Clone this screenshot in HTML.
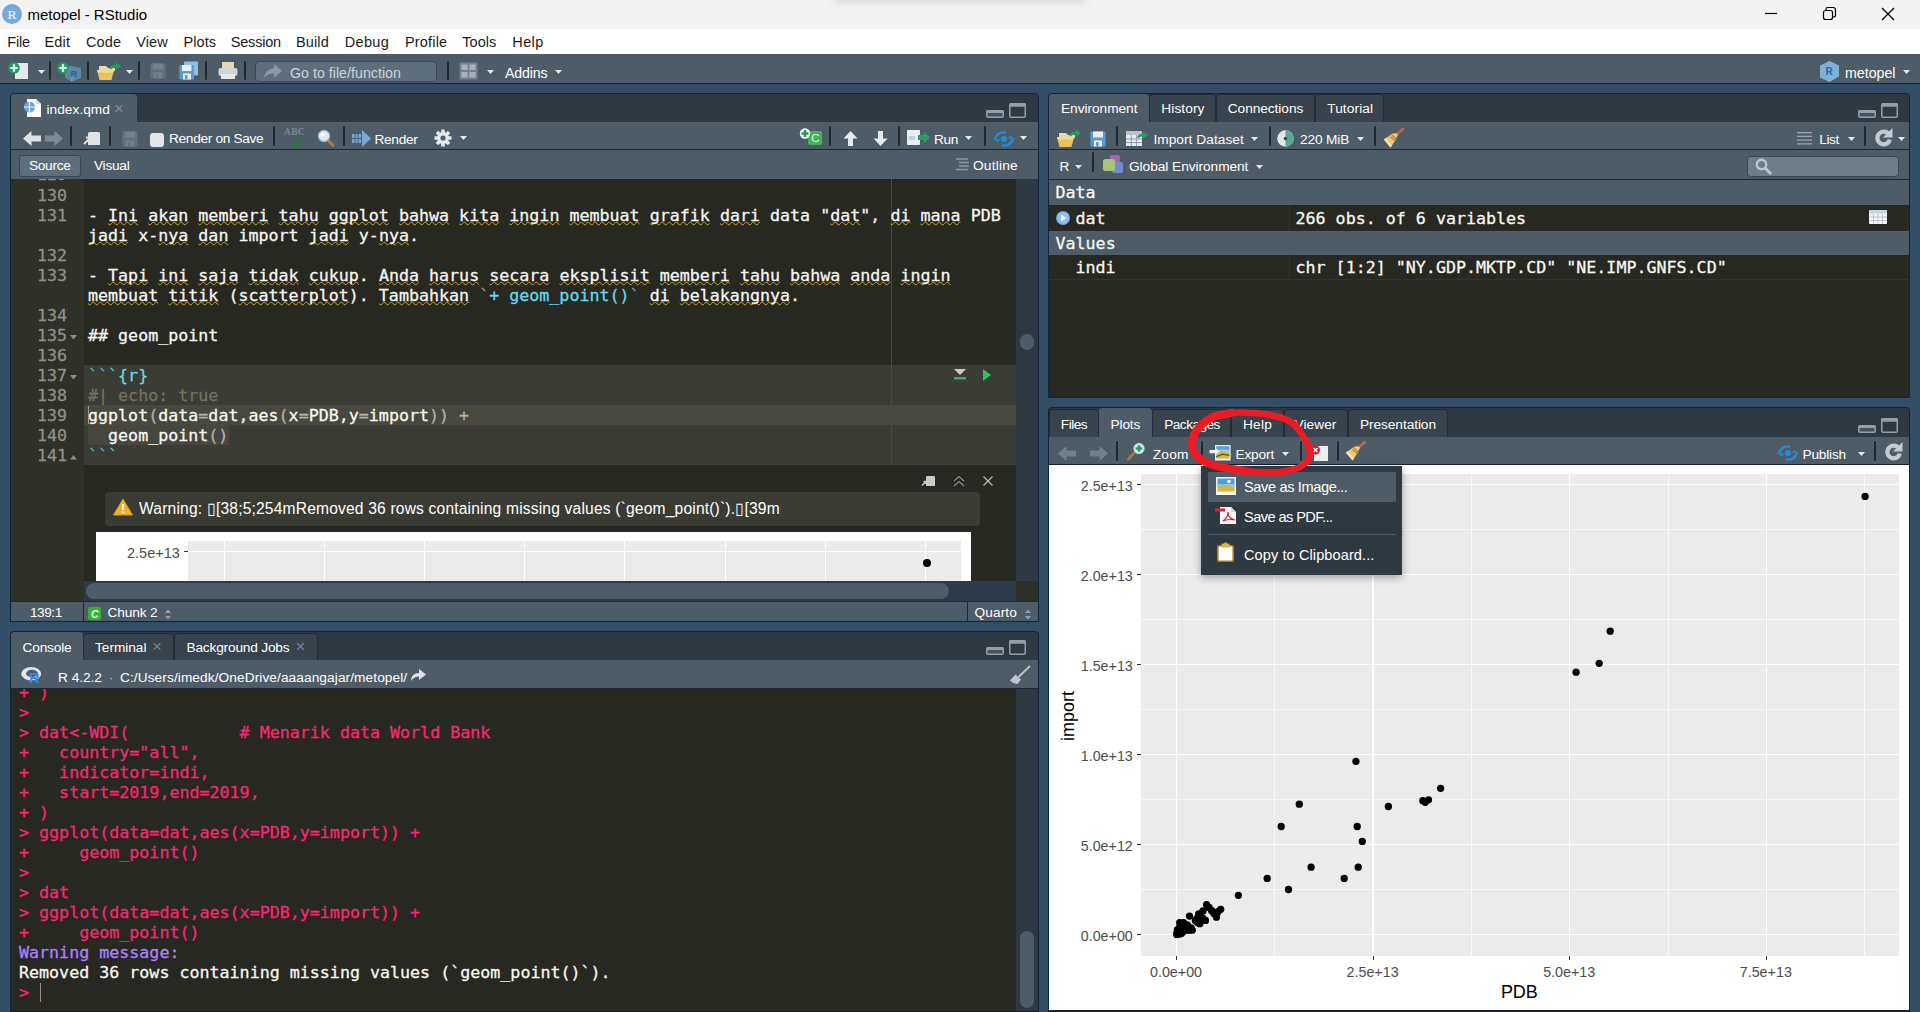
<!DOCTYPE html>
<html lang="id"><head><meta charset="utf-8"><title>metopel - RStudio</title>
<style>
*{box-sizing:border-box;margin:0;padding:0}
html,body{width:1920px;height:1012px;overflow:hidden}
body{background:#324d66;font-family:"Liberation Sans",sans-serif;font-size:13.6px;color:#fff;position:relative}
.abs{position:absolute}
.t{position:absolute;white-space:pre;line-height:1}
.mono{font-family:"DejaVu Sans Mono","Liberation Mono",monospace;font-size:16.67px;-webkit-text-stroke:0.28px}
#titlebar{left:0;top:0;width:1920px;height:29px;background:#f3f3f3}
#menubar{left:0;top:29px;width:1920px;height:25px;background:#fff}
#toolbar{left:0;top:54px;width:1920px;height:30px;background:#4e5c68;border-bottom:1px solid #10253a}

.pane{position:absolute;background:#272822;border:1px solid #10253a;border-radius:4px 4px 0 0;overflow:hidden}
.tabbar{position:absolute;left:0;top:0;right:0;height:28px;background:#2f3941}
.tab{position:absolute;top:3px;height:25px;background:#2f3941;border:1px solid #232c33;border-bottom:none;border-radius:4px 4px 0 0}
.tab.on{background:#4d5c69;top:2px;height:26px;border-color:#4d5c69}
.tb{position:absolute;left:0;right:0;background:#4d5c69}
.sep{position:absolute;width:2px;background:linear-gradient(#222b33,#1d252c 50%,#222b33);border-radius:1px}
.ln{position:absolute;right:0;text-align:right;color:#8f908a}
svg{position:absolute;overflow:visible}
u{text-decoration:underline wavy #c8a52a;text-decoration-thickness:1px;text-underline-offset:0px;text-decoration-skip-ink:none}
</style></head>
<body>
<div class="abs" id="titlebar"></div>
<div class="abs" style="left:835px;top:-12px;width:250px;height:12px;border-radius:6px;box-shadow:0 0 9px 3px rgba(0,0,0,.10)"></div>
<div class="abs" id="menubar"></div>
<div class="abs" id="toolbar"></div>
<div class="abs" style="left:2px;top:4px;width:20px;height:20px;border-radius:50%;background:#75aadb"></div>
<div class="t " style="left:7.5px;top:8px;font-size:13.5px;color:#fff;font-family:'Liberation Serif',serif;">R</div>
<div class="t " style="left:27.5px;top:7px;font-size:15px;color:#000;letter-spacing:-0.033px;">metopel - RStudio</div>
<svg style="left:1764px;top:6px" width="140" height="18" viewBox="0 0 140 18"><path d="M1 7.5h12" stroke="#000" stroke-width="1.2" fill="none"/><rect x="59.5" y="4.5" width="9" height="9" rx="2" fill="none" stroke="#000" stroke-width="1.2"/><path d="M62 4.5v-1.2a1.8 1.8 0 0 1 1.8-1.8h5.4a2.3 2.3 0 0 1 2.3 2.3v5.4a1.8 1.8 0 0 1-1.8 1.8h-1.2" fill="none" stroke="#000" stroke-width="1.2"/><path d="M118 2l12 12M130 2l-12 12" stroke="#000" stroke-width="1.3" fill="none"/></svg>
<div class="t " style="left:7.3px;top:34.8px;font-size:14.5px;color:#1a1a1a;letter-spacing:-0.216px;">File</div>
<div class="t " style="left:44.5px;top:34.8px;font-size:14.5px;color:#1a1a1a;letter-spacing:0.153px;">Edit</div>
<div class="t " style="left:85.9px;top:34.8px;font-size:14.5px;color:#1a1a1a;letter-spacing:0.209px;">Code</div>
<div class="t " style="left:136.2px;top:34.8px;font-size:14.5px;color:#1a1a1a;letter-spacing:0.133px;">View</div>
<div class="t " style="left:183.6px;top:34.8px;font-size:14.5px;color:#1a1a1a;letter-spacing:0.033px;">Plots</div>
<div class="t " style="left:230.79999999999998px;top:34.8px;font-size:14.5px;color:#1a1a1a;letter-spacing:-0.212px;">Session</div>
<div class="t " style="left:296.09999999999997px;top:34.8px;font-size:14.5px;color:#1a1a1a;letter-spacing:0.091px;">Build</div>
<div class="t " style="left:344.8px;top:34.8px;font-size:14.5px;color:#1a1a1a;letter-spacing:0.294px;">Debug</div>
<div class="t " style="left:405.0px;top:34.8px;font-size:14.5px;color:#1a1a1a;letter-spacing:0.171px;">Profile</div>
<div class="t " style="left:462.3px;top:34.8px;font-size:14.5px;color:#1a1a1a;letter-spacing:0.050px;">Tools</div>
<div class="t " style="left:512.3000000000001px;top:34.8px;font-size:14.5px;color:#1a1a1a;letter-spacing:0.394px;">Help</div>
<div class="sep" style="left:48.7px;top:61px;height:19px"></div>
<div class="sep" style="left:87px;top:61px;height:19px"></div>
<div class="sep" style="left:137.5px;top:61px;height:19px"></div>
<div class="sep" style="left:205.3px;top:61px;height:19px"></div>
<div class="sep" style="left:244px;top:61px;height:19px"></div>
<div class="sep" style="left:447.3px;top:61px;height:19px"></div>
<svg style="left:8px;top:62px" width="21" height="18" viewBox="0 0 21 18"><path d="M7 1h13v16H7z" fill="#e6e8ea"/><circle cx="6" cy="6" r="5.8" fill="#1f9d63"/><path d="M6 2.3v7.4M2.3 6h7.4" stroke="#e9fff3" stroke-width="2.2"/></svg>
<svg style="left:38px;top:70px" width="7" height="4" viewBox="0 0 7 4"><path d="M0 0h7l-3.500 4z" fill="#e4e7ea"/></svg>
<svg style="left:57px;top:62px" width="26" height="20" viewBox="0 0 26 20"><path d="M13 4l11 2v10l-9 3.5L8 16V7z" fill="#5e8fb3" opacity=".85"/><path d="M15 9.5v10" stroke="#86b0cf" stroke-width=".8"/><text x="13.5" y="15" font-size="9" font-weight="bold" fill="#27619a" font-family="Liberation Sans,sans-serif">R</text><circle cx="6" cy="6" r="5.8" fill="#1f9d63"/><path d="M6 2.3v7.4M2.3 6h7.4" stroke="#e9fff3" stroke-width="2.2"/></svg>
<svg style="left:96px;top:62px" width="26" height="19" viewBox="0 0 26 19"><path d="M3 4h7l2 2h7v3H3z" fill="#e8d9a6"/><path d="M1 8h17l-2.5 10H3.5z" fill="#e6c35c"/><path d="M1 8h17l-.6 2.5H1.6z" fill="#f3dc8e"/><path d="M13 6c2-3 5-3.5 7-3V.5L25 4l-5 3.5V5.5c-2-.3-4 .5-5 2z" fill="#1f9d63"/></svg>
<svg style="left:126px;top:70px" width="7" height="4" viewBox="0 0 7 4"><path d="M0 0h7l-3.500 4z" fill="#e4e7ea"/></svg>
<svg style="left:150px;top:63px" width="16" height="16" viewBox="0 0 16 16"><g opacity="1"><rect x="0.5" y="0.5" width="15" height="15" rx="1" fill="#63717d"/><rect x="3" y="0.5" width="10" height="6" fill="#73808c"/><rect x="4" y="9.5" width="8" height="6" fill="#73808c"/><rect x="6" y="11" width="2.5" height="4.5" fill="#63717d"/></g></svg>
<svg style="left:179px;top:61px" width="20" height="19" viewBox="0 0 20 19"><rect x="5" y="0.5" width="14" height="14" rx="1" fill="#8fc0e6"/><rect x="0.5" y="4" width="14.5" height="14.5" rx="1" fill="#5b9bd5"/><rect x="3" y="4" width="9.5" height="6" fill="#e8eef4"/><rect x="4" y="12.5" width="8" height="6" fill="#e8eef4"/><rect x="6" y="14" width="2.5" height="4.5" fill="#5b9bd5"/></svg>
<svg style="left:218px;top:61px" width="20" height="19" viewBox="0 0 20 19"><rect x="4" y="1" width="12" height="8" fill="#e4d9b0"/><rect x="0.5" y="7" width="19" height="8" rx="2" fill="#cfd5da"/><rect x="3" y="13" width="14" height="5" fill="#e6e9ec"/></svg>
<div class="abs" style="left:254.5px;top:61px;width:182.5px;height:20.5px;background:#5f6e7b;border:1px solid #3b4854;border-radius:4px"></div>
<svg style="left:263px;top:63px" width="20" height="16" viewBox="0 0 20 16"><path d="M1 15c1-7 5-9.5 10-9.5V1l8 7-8 7v-4.5C7 10.500 3.500 11.500 1 15z" fill="#8b98a5"/></svg>
<div class="t " style="left:290px;top:66px;font-size:14.2px;color:#cdd3d8;letter-spacing:0.026px;">Go to file/function</div>
<svg style="left:459px;top:62px" width="19" height="18" viewBox="0 0 19 18"><rect x=".5" y=".5" width="18" height="17" rx="1.5" fill="#76838f"/><rect x="2.5" y="2.5" width="6" height="5.500" fill="#a8b2bb"/><rect x="10.5" y="2.5" width="6" height="5.500" fill="#a8b2bb"/><rect x="2.5" y="10" width="6" height="5.500" fill="#a8b2bb"/><rect x="10.5" y="10" width="6" height="5.500" fill="#a8b2bb"/></svg>
<svg style="left:487px;top:70px" width="7" height="4" viewBox="0 0 7 4"><path d="M0 0h7l-3.500 4z" fill="#e4e7ea"/></svg>
<div class="t " style="left:505px;top:66px;font-size:14.2px;color:#fff;letter-spacing:-0.153px;">Addins</div>
<svg style="left:555px;top:70px" width="7" height="4" viewBox="0 0 7 4"><path d="M0 0h7l-3.500 4z" fill="#e4e7ea"/></svg>
<svg style="left:1820px;top:61px" width="19" height="21" viewBox="0 0 19 21"><path d="M9.500 0L19 4.500v11L9.500 21 0 16.500v-12z" fill="#7fb0d6"/><text x="5.500" y="14" font-size="10" font-weight="bold" fill="#2a6aa6" font-family="Liberation Sans,sans-serif">R</text></svg>
<div class="t " style="left:1845px;top:66px;font-size:14.2px;color:#fff;letter-spacing:-0.003px;">metopel</div>
<svg style="left:1903px;top:70px" width="7" height="4" viewBox="0 0 7 4"><path d="M0 0h7l-3.500 4z" fill="#e4e7ea"/></svg>
<div class="pane" style="left:10px;top:93px;width:1029px;height:528.5px"></div>
<div class="abs" style="left:11px;top:94px;width:1027px;height:28px;background:#2f3941;border-radius:3px 3px 0 0"></div>
<div class="abs" style="left:11px;top:94px;width:126px;height:28px;background:#4e5c68;border-radius:3px 4px 0 0"></div>
<div class="abs" style="left:11px;top:122px;width:1027px;height:27px;background:#4e5c68;"></div>
<div class="abs" style="left:11px;top:149px;width:1027px;height:1px;background:#1c2833;"></div>
<div class="abs" style="left:11px;top:150px;width:1027px;height:29px;background:#4e5c68;"></div>
<div class="abs" style="left:11px;top:179px;width:1027px;height:422px;background:#272822;"></div>
<div class="abs" style="left:11px;top:179px;width:73px;height:422px;background:#2f3129;"></div>
<div class="abs" style="left:84px;top:365px;width:932px;height:100px;background:#3b3c36;"></div>
<div class="abs" style="left:84px;top:405px;width:932px;height:20px;background:#48483e;"></div>
<div class="abs" style="left:88px;top:425px;width:141px;height:20px;background:#46463f;"></div>
<div class="abs" style="left:891px;top:179px;width:1px;height:286px;background:#4a4b45;"></div>
<div class="abs" style="left:1016px;top:179px;width:22px;height:402px;background:#2f3941;"></div>
<div class="abs" style="left:1020px;top:334px;width:14px;height:16px;border-radius:8px;background:#4e5c68"></div>
<div class="abs" style="left:84px;top:581px;width:932px;height:20px;background:#2c3b49;"></div>
<div class="abs" style="left:1016px;top:581px;width:22px;height:20px;background:#2d2e28;"></div>
<div class="abs" style="left:86px;top:583px;width:863px;height:16px;border-radius:8px;background:#4e5c68"></div>
<div class="abs" style="left:11px;top:601px;width:1027px;height:19.5px;background:#4e5c68;border-top:1px solid #1c2833"></div>
<div class="abs" style="left:82.5px;top:602px;width:1px;height:19.5px;background:#1c2833;"></div>
<div class="abs" style="left:967px;top:602px;width:1px;height:19.5px;background:#1c2833;"></div>
<div class="t " style="left:30px;top:605.5px;font-size:13.7px;color:#fff;letter-spacing:-0.497px;">139:1</div>
<div class="abs" style="left:88px;top:607px;width:13px;height:13px;background:#36b336;border-radius:2px"></div>
<div class="t " style="left:91px;top:608.5px;font-size:10.5px;color:#e9ffe9;font-weight:bold;font-style:italic;">C</div>
<div class="t " style="left:107.5px;top:605.5px;font-size:13.7px;color:#fff;letter-spacing:-0.147px;">Chunk 2</div>
<svg style="left:165px;top:609px" width="6" height="10" viewBox="0 0 6 10"><path d="M0 4l3-3.5 3 3.5zM0 7l3 3.5 3-3.5z" fill="#93a0ab"/></svg>
<div class="t " style="left:974.5px;top:605.8px;font-size:13.7px;color:#fff;letter-spacing:0.103px;">Quarto</div>
<svg style="left:1025px;top:609px" width="6" height="10" viewBox="0 0 6 10"><path d="M0 4l3-3.5 3 3.5zM0 7l3 3.5 3-3.5z" fill="#93a0ab"/></svg>
<svg style="left:23px;top:98px" width="20" height="20" viewBox="0 0 20 20"><path d="M4 1h9l5 5v13H4z" fill="#fff"/><path d="M13 1l5 5h-5z" fill="#d4dbe2"/><circle cx="6.5" cy="9" r="5.5" fill="#6fa4d8"/><path d="M6.5 3.5v11M1 9h11" stroke="#eaf2fa" stroke-width="1.2"/></svg>
<div class="t " style="left:46.5px;top:102.5px;font-size:13.7px;color:#fff;letter-spacing:0.032px;">index.qmd</div>
<div class="t " style="left:114px;top:100px;font-size:17px;color:#7f8c97;">×</div>
<svg style="left:986px;top:102.7px" width="42" height="16" viewBox="0 0 42 16"><rect x="0.75" y="7.75" width="16.5" height="6.500" rx="1.200" fill="#46535f" stroke="#929ea8" stroke-width="1.500"/><rect x="0.500" y="7.300" width="17" height="2.600" rx="1" fill="#929ea8"/><rect x="23.75" y="0.75" width="15.500" height="13.500" rx="1.200" fill="#2f3941" stroke="#929ea8" stroke-width="1.500"/><rect x="23.300" y="0.300" width="16.400" height="3.400" rx="1" fill="#929ea8"/></svg>
<svg style="left:22px;top:130px" width="42" height="17" viewBox="0 0 42 17"><path d="M1 8.5L9.5 1v4.5H19v6H9.5V16z" fill="#dfe3e7"/><path d="M41 8.5L32.5 1v4.5H23v6h9.5V16z" fill="#7e8b96"/></svg>
<div class="sep" style="left:70px;top:125.5px;height:20px"></div>
<svg style="left:83px;top:131px" width="18" height="15" viewBox="0 0 18 15"><path d="M5 2.5Q5 1 6.5 1h9Q17 1 17 2.5V14H5z" fill="#dfe3e7"/><path d="M1 13l6-6M3 6.5h4.5V11" stroke="#dfe3e7" stroke-width="2" fill="none"/></svg>
<div class="sep" style="left:109px;top:125.5px;height:20px"></div>
<svg style="left:122px;top:131px" width="16" height="16" viewBox="0 0 16 16"><g opacity="1"><rect x="0.5" y="0.5" width="15" height="15" rx="1" fill="#63717d"/><rect x="3" y="0.5" width="10" height="6" fill="#73808c"/><rect x="4" y="9.5" width="8" height="6" fill="#73808c"/><rect x="6" y="11" width="2.5" height="4.5" fill="#63717d"/></g></svg>
<div class="abs" style="left:150px;top:133px;width:14px;height:14px;background:#e3e6ea;border-radius:3px"></div>
<div class="t " style="left:169px;top:132px;font-size:13.7px;color:#fff;letter-spacing:-0.322px;">Render on Save</div>
<div class="sep" style="left:273px;top:125.5px;height:20px"></div>
<div class="t " style="left:284px;top:128px;font-size:9.5px;color:#7c8893;font-family:'Liberation Serif',serif;font-weight:bold;letter-spacing:.3px;">ABC</div>
<svg style="left:290px;top:137px" width="13" height="10" viewBox="0 0 13 10"><path d="M1 6l3.5 3L12 1" stroke="#2c7440" stroke-width="2.4" fill="none"/></svg>
<svg style="left:317px;top:129px" width="18" height="18" viewBox="0 0 18 18"><path d="M10 10l6 6.5" stroke="#b5793a" stroke-width="3" stroke-linecap="round"/><circle cx="7" cy="7" r="5.6" fill="#dfe9f3" stroke="#9fb4c7" stroke-width="1.2"/><circle cx="5.5" cy="5.5" r="2" fill="#fff"/></svg>
<div class="sep" style="left:343px;top:125.5px;height:20px"></div>
<svg style="left:352px;top:130px" width="19" height="17" viewBox="0 0 19 17"><rect x="0" y="4" width="9" height="9" fill="#7aa7d6"/><path d="M3 4v9M6 4v9M0 8.5h9" stroke="#4e5c68" stroke-width="1"/><path d="M10 0l9 8.5-9 8.5z" fill="#7aa7d6"/></svg>
<div class="t " style="left:374.5px;top:133px;font-size:13.7px;color:#fff;letter-spacing:-0.322px;">Render</div>
<svg style="left:434px;top:129px" width="18" height="18" viewBox="0 0 18 18"><g transform="translate(9 9)"><g fill="#e6e9ec"><rect x="-1.8" y="-8.5" width="3.6" height="17" rx=".6"/><rect x="-1.8" y="-8.5" width="3.6" height="17" rx=".6" transform="rotate(45)"/><rect x="-1.8" y="-8.5" width="3.6" height="17" rx=".6" transform="rotate(90)"/><rect x="-1.8" y="-8.5" width="3.6" height="17" rx=".6" transform="rotate(135)"/><circle r="6"/></g><circle r="2.6" fill="#4e5c68"/></g></svg>
<svg style="left:460px;top:136px" width="7" height="4" viewBox="0 0 7 4"><path d="M0 0h7l-3.500 4z" fill="#e4e7ea"/></svg>
<svg style="left:798px;top:127px" width="26" height="20" viewBox="0 0 26 20"><rect x="10" y="4" width="14" height="14" rx="2" fill="#43b05c"/><text x="13.200" y="15.300" font-size="11.500" fill="#dff5e2" font-family="Liberation Sans,sans-serif">C</text><circle cx="7" cy="6.500" r="5.200" fill="#fff"/><path d="M7 3v7M3.500 6.500h7" stroke="#23963f" stroke-width="2.300"/></svg>
<div class="sep" style="left:829px;top:125.5px;height:20px"></div>
<svg style="left:843px;top:130.5px" width="15" height="15" viewBox="0 0 15 15"><path d="M7.500 0L14.500 7.500h-4.500v7.500H5V7.500H.500z" fill="#e6e9ec"/></svg>
<svg style="left:873px;top:130.5px" width="15" height="15" viewBox="0 0 15 15"><path d="M7.500 15L14.500 7.500h-4.500V0H5v7.500H.500z" fill="#e6e9ec"/></svg>
<div class="sep" style="left:898px;top:125.5px;height:20px"></div>
<svg style="left:907px;top:129px" width="24" height="18" viewBox="0 0 24 18"><rect x="0" y="1" width="13" height="15" rx="1" fill="#e9edf1"/><path d="M2 8h6M2 10h6" stroke="#9db4d0" stroke-width="1"/><path d="M11 6h6V3l6 5.5-6 5.5v-3h-6z" fill="#29a05a"/></svg>
<div class="t " style="left:934px;top:133px;font-size:13.7px;color:#fff;letter-spacing:-0.378px;">Run</div>
<svg style="left:965px;top:136px" width="7" height="4" viewBox="0 0 7 4"><path d="M0 0h7l-3.500 4z" fill="#e4e7ea"/></svg>
<div class="sep" style="left:984px;top:125.5px;height:20px"></div>
<svg style="left:994px;top:130px" width="20" height="18" viewBox="0 0 20 18"><path d="M1 9c2-5 6-7 10-6.5" fill="none" stroke="#1f8ed6" stroke-width="2.4" stroke-linecap="round"/><path d="M19 9c-2 5-6 7-10 6.5" fill="none" stroke="#1f8ed6" stroke-width="2.4" stroke-linecap="round"/><circle cx="10" cy="9" r="3" fill="#1f8ed6"/><path d="M2 11l3-1" stroke="#1f8ed6" stroke-width="2" /><path d="M18 7l-3 1" stroke="#1f8ed6" stroke-width="2"/></svg>
<svg style="left:1020px;top:136px" width="7" height="4" viewBox="0 0 7 4"><path d="M0 0h7l-3.500 4z" fill="#e4e7ea"/></svg>
<div class="abs" style="left:19px;top:155px;width:62px;height:22px;background:#5f6e7b;border:1px solid #3a4652;border-radius:3px"></div>
<div class="t " style="left:29px;top:159px;font-size:13.7px;color:#fff;letter-spacing:-0.318px;">Source</div>
<div class="t " style="left:94px;top:159px;font-size:13.7px;color:#fff;letter-spacing:-0.261px;">Visual</div>
<svg style="left:956px;top:158px" width="13" height="13" viewBox="0 0 13 13"><path d="M0 1h12M3 4.5h10M3 8h10M0 11.5h12" stroke="#8b98a4" stroke-width="1.3"/></svg>
<div class="t " style="left:973px;top:159px;font-size:13.7px;color:#fff;letter-spacing:0.227px;">Outline</div>
<div class="t mono" style="left:11px;width:56px;text-align:right;top:167px;color:#90918b;clip-path:inset(12px 0 0 0)">129</div>
<div class="t mono" style="left:11px;width:56px;text-align:right;top:188px;color:#90918b">130</div>
<div class="t mono" style="left:11px;width:56px;text-align:right;top:208px;color:#90918b">131</div>
<div class="t mono" style="left:11px;width:56px;text-align:right;top:248px;color:#90918b">132</div>
<div class="t mono" style="left:11px;width:56px;text-align:right;top:268px;color:#90918b">133</div>
<div class="t mono" style="left:11px;width:56px;text-align:right;top:308px;color:#90918b">134</div>
<div class="t mono" style="left:11px;width:56px;text-align:right;top:328px;color:#90918b">135</div>
<svg style="left:70px;top:335px" width="7" height="5" viewBox="0 0 7 5"><path d="M0 0h7l-3.5 4.5z" fill="#8d8e88"/></svg>
<div class="t mono" style="left:11px;width:56px;text-align:right;top:348px;color:#90918b">136</div>
<div class="t mono" style="left:11px;width:56px;text-align:right;top:368px;color:#90918b">137</div>
<svg style="left:70px;top:375px" width="7" height="5" viewBox="0 0 7 5"><path d="M0 0h7l-3.5 4.5z" fill="#8d8e88"/></svg>
<div class="t mono" style="left:11px;width:56px;text-align:right;top:388px;color:#90918b">138</div>
<div class="t mono" style="left:11px;width:56px;text-align:right;top:408px;color:#90918b">139</div>
<div class="t mono" style="left:11px;width:56px;text-align:right;top:428px;color:#90918b">140</div>
<div class="t mono" style="left:11px;width:56px;text-align:right;top:448px;color:#90918b">141</div>
<svg style="left:70px;top:455px" width="7" height="5" viewBox="0 0 7 5"><path d="M0 4.5h7L3.5 0z" fill="#8d8e88"/></svg>
<div class="t mono" style="left:88px;top:208px;color:#f8f8f2">- <u>Ini</u> <u>akan</u> <u>memberi</u> <u>tahu</u> <u>ggplot</u> <u>bahwa</u> <u>kita</u> <u>ingin</u> <u>membuat</u> <u>grafik</u> <u>dari</u> data "<u>dat</u>", <u>di</u> <u>mana</u> PDB</div>
<div class="t mono" style="left:88px;top:228px;color:#f8f8f2"><u>jadi</u> x-<u>nya</u> <u>dan</u> import <u>jadi</u> y-<u>nya</u>.</div>
<div class="t mono" style="left:88px;top:268px;color:#f8f8f2">- <u>Tapi</u> <u>ini</u> <u>saja</u> <u>tidak</u> <u>cukup</u>. <u>Anda</u> <u>harus</u> <u>secara</u> <u>eksplisit</u> <u>memberi</u> <u>tahu</u> <u>bahwa</u> <u>anda</u> <u>ingin</u></div>
<div class="t mono" style="left:88px;top:288px;color:#f8f8f2"><u>membuat</u> <u>titik</u> (<u>scatterplot</u>). <u>Tambahkan</u> <span style="color:#8a9a9a">`</span><span style="color:#66d9ef">+ geom_point()</span><span style="color:#8a9a9a">`</span> <u>di</u> <u>belakangnya</u>.</div>
<div class="t mono" style="left:88px;top:328px;color:#f8f8f2">## geom_point</div>
<div class="t mono" style="left:88px;top:368px;color:#f8f8f2"><span style="color:#5fb7c9">```</span><span style="color:#66d9ef">{r}</span></div>
<div class="t mono" style="left:88px;top:388px;color:#f8f8f2"><span style="color:#75715e">#| echo: true</span></div>
<div class="t mono" style="left:88px;top:408px;color:#f8f8f2">ggplot<span style="color:#b3b3ab">(</span>data<span style="color:#b3b3ab">=</span>dat,aes<span style="color:#b3b3ab">(</span>x<span style="color:#b3b3ab">=</span>PDB,y<span style="color:#b3b3ab">=</span>import<span style="color:#b3b3ab">))</span> <span style="color:#b3b3ab">+</span></div>
<div class="t mono" style="left:88px;top:428px;color:#f8f8f2">  geom_point<span style="color:#b3b3ab">()</span></div>
<div class="t mono" style="left:88px;top:448px;color:#f8f8f2"><span style="color:#5fb7c9">```</span></div>
<div class="abs" style="left:88px;top:406px;width:1px;height:18px;background:#9a9a92;"></div>
<svg style="left:953px;top:369px" width="14" height="12" viewBox="0 0 14 12"><path d="M1 0h12l-6 6z" fill="#c9cbc6"/><rect x="1" y="8" width="12" height="2.5" fill="#3dab5b"/></svg>
<svg style="left:983px;top:369px" width="8" height="12" viewBox="0 0 8 12"><path d="M0 0l8 6-8 6z" fill="#2fc25b"/></svg>
<svg style="left:921px;top:475px" width="16" height="12" viewBox="0 0 16 12"><path d="M5 2Q5 1 6 1h7Q14 1 14 2v9H5z" fill="#c9cbc6"/><path d="M1 10.5l4-4M2.5 6.5H5V9" stroke="#c9cbc6" stroke-width="1.5" fill="none"/></svg>
<svg style="left:953px;top:475px" width="12" height="12" viewBox="0 0 12 12"><path d="M1 6l5-4.5L11 6M1 11l5-4.5 5 4.5" stroke="#8a8c86" stroke-width="1.2" fill="none"/></svg>
<svg style="left:983px;top:476px" width="10" height="10" viewBox="0 0 10 10"><path d="M0.5 0.5l9 9M9.5 0.5l-9 9" stroke="#b9bbb5" stroke-width="1.3"/></svg>
<div class="abs" style="left:105px;top:492px;width:875px;height:33.5px;background:#3a3b35;border-radius:4px"></div>
<svg style="left:113px;top:498px" width="20" height="18" viewBox="0 0 20 18"><path d="M10 1L19.5 17H.5z" fill="#f0b323" stroke="#d99b10" stroke-width="1" stroke-linejoin="round"/><path d="M10 6v6" stroke="#fff" stroke-width="2.2"/><circle cx="10" cy="14.5" r="1.3" fill="#fff"/></svg>
<div class="t " style="left:139px;top:500.5px;font-size:15.6px;color:#fff;letter-spacing:0.178px;">Warning: ▯[38;5;254mRemoved 36 rows containing missing values (`geom_point()`).▯[39m</div>
<div class="abs" style="left:96px;top:532px;width:875px;height:49px;background:#fff;"></div>
<div class="abs" style="left:188px;top:541px;width:773px;height:40px;background:#ebebeb;"></div>
<div class="abs" style="left:224px;top:541px;width:1px;height:40px;background:#fff;"></div>
<div class="abs" style="left:324px;top:541px;width:1px;height:40px;background:#fff;"></div>
<div class="abs" style="left:424px;top:541px;width:1px;height:40px;background:#fff;"></div>
<div class="abs" style="left:524px;top:541px;width:1px;height:40px;background:#fff;"></div>
<div class="abs" style="left:624px;top:541px;width:1px;height:40px;background:#fff;"></div>
<div class="abs" style="left:725px;top:541px;width:1px;height:40px;background:#fff;"></div>
<div class="abs" style="left:825px;top:541px;width:1px;height:40px;background:#fff;"></div>
<div class="abs" style="left:925px;top:541px;width:1px;height:40px;background:#fff;"></div>
<div class="abs" style="left:188px;top:550.5px;width:773px;height:1.2px;background:#fff;"></div>
<div class="t " style="left:127px;top:545.5px;font-size:14.5px;color:#4d4d4d;">2.5e+13</div>
<div class="abs" style="left:184px;top:550.5px;width:4px;height:1.2px;background:#333;"></div>
<div class="abs" style="left:922.500px;top:558.500px;width:8px;height:8px;border-radius:50%;background:#000"></div>
<div class="pane" style="left:10px;top:631px;width:1029px;height:390px"></div>
<div class="abs" style="left:11px;top:632px;width:1027px;height:28px;background:#2f3941;border-radius:4px 4px 0 0"></div>
<div class="abs" style="left:11px;top:632px;width:72px;height:28px;background:#4e5c68;border-radius:4px 4px 0 0"></div>
<div class="abs" style="left:83px;top:632.5px;width:91px;height:27.5px;background:#38434d;border:1px solid #242d35;border-bottom:none;border-radius:4px 4px 0 0"></div>
<div class="abs" style="left:174px;top:632.5px;width:143.5px;height:27.5px;background:#38434d;border:1px solid #242d35;border-bottom:none;border-radius:4px 4px 0 0"></div>
<div class="t " style="left:22.5px;top:640.8px;font-size:13.7px;color:#fff;letter-spacing:-0.181px;">Console</div>
<div class="t " style="left:95px;top:640.8px;font-size:13.7px;color:#fff;letter-spacing:-0.034px;">Terminal</div>
<div class="t " style="left:152px;top:638px;font-size:17px;color:#74818c;">×</div>
<div class="t " style="left:186.5px;top:640.8px;font-size:13.7px;color:#fff;letter-spacing:-0.191px;">Background Jobs</div>
<div class="t " style="left:295.5px;top:638px;font-size:17px;color:#74818c;">×</div>
<svg style="left:986px;top:639.7px" width="42" height="16" viewBox="0 0 42 16"><rect x="0.75" y="7.75" width="16.5" height="6.500" rx="1.200" fill="#46535f" stroke="#929ea8" stroke-width="1.500"/><rect x="0.500" y="7.300" width="17" height="2.600" rx="1" fill="#929ea8"/><rect x="23.75" y="0.75" width="15.500" height="13.500" rx="1.200" fill="#2f3941" stroke="#929ea8" stroke-width="1.500"/><rect x="23.300" y="0.300" width="16.400" height="3.400" rx="1" fill="#929ea8"/></svg>
<div class="abs" style="left:11px;top:660px;width:1027px;height:28px;background:#4e5c68;"></div>
<div class="abs" style="left:11px;top:688px;width:1027px;height:1px;background:#1c2833;"></div>
<svg style="left:21px;top:666px" width="22" height="18" viewBox="0 0 22 18"><ellipse cx="10.200" cy="7.800" rx="10" ry="6.800" fill="#dfe4e9"/><ellipse cx="11" cy="7.500" rx="6" ry="3.700" fill="#4e5c68"/><text x="8.300" y="17.200" font-size="14" font-weight="bold" fill="#2a8cf0" font-family="Liberation Sans,sans-serif">R</text></svg>
<div class="t " style="left:58px;top:670.5px;font-size:13.7px;color:#fff;letter-spacing:-0.024px;">R 4.2.2</div>
<div class="t " style="left:109px;top:670.5px;font-size:13.7px;color:#c0c8cf;">·</div>
<div class="t " style="left:120px;top:670.5px;font-size:13.7px;color:#fff;letter-spacing:0.081px;">C:/Users/imedk/OneDrive/aaaangajar/metopel/</div>
<svg style="left:411px;top:669px" width="15" height="12" viewBox="0 0 15 12"><path d="M0 12c0-5 3-8 8-8V0l7 5.500-7 5.500V7.500C4.500 7.500 2 9 0 12z" fill="#dfe3e7"/></svg>
<svg style="left:1009px;top:665px" width="22" height="20" viewBox="0 0 22 20"><path d="M20.500 1.500L10 11.500" stroke="#bfc6cd" stroke-width="1.800" stroke-linecap="round"/><path d="M6.500 9.500l5.500 5-3.500 4.500c-3-.3-5.500-1.500-7.500-3.500z" fill="#bfc6cd"/></svg>
<div class="abs" style="left:1016px;top:689px;width:22px;height:323px;background:#2f3941;"></div>
<div class="abs" style="left:1020px;top:931px;width:14px;height:76.5px;border-radius:7px;background:#4e5c68"></div>
<div class="abs" style="left:11px;top:689px;width:1005px;height:323px;overflow:hidden">
<div class="t mono" style="left:8px;top:-3.6px;color:#f92672">+ )</div>
<div class="t mono" style="left:8px;top:16.4px;color:#f92672">&gt;</div>
<div class="t mono" style="left:8px;top:36.4px;color:#f92672">&gt; dat&lt;-WDI(           # Menarik data World Bank</div>
<div class="t mono" style="left:8px;top:56.4px;color:#f92672">+   country="all",</div>
<div class="t mono" style="left:8px;top:76.4px;color:#f92672">+   indicator=indi,</div>
<div class="t mono" style="left:8px;top:96.4px;color:#f92672">+   start=2019,end=2019,</div>
<div class="t mono" style="left:8px;top:116.4px;color:#f92672">+ )</div>
<div class="t mono" style="left:8px;top:136.4px;color:#f92672">&gt; ggplot(data=dat,aes(x=PDB,y=import)) +</div>
<div class="t mono" style="left:8px;top:156.4px;color:#f92672">+     geom_point()</div>
<div class="t mono" style="left:8px;top:176.4px;color:#f92672">&gt;</div>
<div class="t mono" style="left:8px;top:196.4px;color:#f92672">&gt; dat</div>
<div class="t mono" style="left:8px;top:216.4px;color:#f92672">&gt; ggplot(data=dat,aes(x=PDB,y=import)) +</div>
<div class="t mono" style="left:8px;top:236.4px;color:#f92672">+     geom_point()</div>
<div class="t mono" style="left:8px;top:256.4px;color:#ae81ff">Warning message:</div>
<div class="t mono" style="left:8px;top:276.4px;color:#f8f8f2">Removed 36 rows containing missing values (`geom_point()`).</div>
<div class="t mono" style="left:8px;top:296.4px;color:#f92672">&gt; </div>
</div>
<div class="abs" style="left:40px;top:982.5px;width:1px;height:19px;background:#8f908a;"></div>
<div class="abs" style="left:10px;top:1010.5px;width:1029px;height:1.5px;background:#111d29;"></div>
<div class="pane" style="left:1048px;top:93px;width:862px;height:305px"></div>
<div class="abs" style="left:1049px;top:94px;width:860px;height:28px;background:#2f3941;border-radius:3px 3px 0 0"></div>
<div class="abs" style="left:1049px;top:93.5px;width:99.5px;height:28.5px;background:#4e5c68;border-radius:4px 4px 0 0"></div>
<div class="abs" style="left:1148.5px;top:94px;width:67px;height:28px;background:#38434d;border:1px solid #242d35;border-bottom:none;border-radius:4px 4px 0 0"></div>
<div class="abs" style="left:1215.5px;top:94px;width:99px;height:28px;background:#38434d;border:1px solid #242d35;border-bottom:none;border-radius:4px 4px 0 0"></div>
<div class="abs" style="left:1314.5px;top:94px;width:69.5px;height:28px;background:#38434d;border:1px solid #242d35;border-bottom:none;border-radius:4px 4px 0 0"></div>
<div class="t " style="left:1061px;top:102px;font-size:13.7px;color:#fff;letter-spacing:-0.037px;">Environment</div>
<div class="t " style="left:1161.3px;top:102px;font-size:13.7px;color:#fff;letter-spacing:0.082px;">History</div>
<div class="t " style="left:1227.8px;top:102px;font-size:13.7px;color:#fff;letter-spacing:-0.060px;">Connections</div>
<div class="t " style="left:1327.2px;top:102px;font-size:13.7px;color:#fff;letter-spacing:0.103px;">Tutorial</div>
<svg style="left:1858px;top:102.7px" width="42" height="16" viewBox="0 0 42 16"><rect x="0.75" y="7.75" width="16.5" height="6.500" rx="1.200" fill="#46535f" stroke="#929ea8" stroke-width="1.500"/><rect x="0.500" y="7.300" width="17" height="2.600" rx="1" fill="#929ea8"/><rect x="23.75" y="0.75" width="15.500" height="13.500" rx="1.200" fill="#2f3941" stroke="#929ea8" stroke-width="1.500"/><rect x="23.300" y="0.300" width="16.400" height="3.400" rx="1" fill="#929ea8"/></svg>
<div class="abs" style="left:1049px;top:122px;width:860px;height:27px;background:#4e5c68;"></div>
<div class="abs" style="left:1049px;top:149px;width:860px;height:1px;background:#1c2833;"></div>
<div class="abs" style="left:1049px;top:150px;width:860px;height:29px;background:#4e5c68;"></div>
<div class="abs" style="left:1049px;top:179px;width:860px;height:1px;background:#1c2833;"></div>
<svg style="left:1056px;top:129px" width="26" height="19" viewBox="0 0 26 19"><path d="M3 4h7l2 2h7v3H3z" fill="#e8d9a6"/><path d="M1 8h17l-2.500 10H3.500z" fill="#e6c35c"/><path d="M1 8h17l-.6 2.500H1.600z" fill="#f3dc8e"/><path d="M13 6c2-3 5-3.500 7-3V.500L25 4l-5 3.500V5.500c-2-.3-4 .5-5 2z" fill="#1f9d63"/></svg>
<svg style="left:1090px;top:131px" width="16" height="16" viewBox="0 0 16 16"><g opacity="1"><rect x="0.5" y="0.5" width="15" height="15" rx="1" fill="#5b9bd5"/><rect x="3" y="0.5" width="10" height="6" fill="#e8eef4"/><rect x="4" y="9.5" width="8" height="6" fill="#e8eef4"/><rect x="6" y="11" width="2.5" height="4.5" fill="#5b9bd5"/></g></svg>
<div class="sep" style="left:1115.5px;top:125.5px;height:20px"></div>
<svg style="left:1126px;top:129px" width="24" height="18" viewBox="0 0 24 18"><rect x="0" y="2" width="16" height="15" fill="#e9edf1"/><rect x="0" y="2" width="16" height="4" fill="#b9c3cc"/><path d="M0 10h16M0 13.500h16M5.300 6v11M10.600 6v11" stroke="#8f9aa5" stroke-width="1"/><path d="M11 8c2-3 4-3.500 6-3V2.500L23 6l-6 3.500V7.500c-2-.3-3.500 .5-4.500 2z" fill="#1f9d63"/></svg>
<div class="t " style="left:1153.4px;top:133px;font-size:13.7px;color:#fff;letter-spacing:0.047px;">Import Dataset</div>
<svg style="left:1251px;top:137px" width="7" height="4" viewBox="0 0 7 4"><path d="M0 0h7l-3.500 4z" fill="#e4e7ea"/></svg>
<div class="sep" style="left:1268.5px;top:125.5px;height:20px"></div>
<svg style="left:1277px;top:130px" width="17" height="17" viewBox="0 0 17 17"><circle cx="8.500" cy="8.500" r="8.300" fill="#dfe6e3"/><path d="M8.500 8.500V.2A8.300 8.300 0 0 1 8.500 16.800z" fill="#5aa890"/><circle cx="8.500" cy="8.500" r="1.800" fill="#2f4f48"/></svg>
<div class="t " style="left:1300px;top:133px;font-size:13.7px;color:#fff;letter-spacing:-0.137px;">220 MiB</div>
<svg style="left:1357px;top:137px" width="7" height="4" viewBox="0 0 7 4"><path d="M0 0h7l-3.500 4z" fill="#e4e7ea"/></svg>
<div class="sep" style="left:1373.5px;top:125.5px;height:20px"></div>
<svg style="left:1384px;top:127.5px" width="20" height="20" viewBox="0 0 20 20"><path d="M18.800 1.200L13 6" stroke="#c0604f" stroke-width="2.800" stroke-linecap="round"/><path d="M7.500 6.300C9.500 4.600 12.500 4.800 14.200 6.600L10.600 13.600 6.500 19.600-.200 11.500z" fill="#e9c978"/><path d="M-.200 11.500l6.700 8.100 1.500-2.200-6-7.300z" fill="#f3e2ad"/><path d="M7.600 7l4.600 3.700M6.400 8.800l5 4" stroke="#b48428" stroke-width="1.100"/></svg>
<svg style="left:1797px;top:132px" width="15" height="13" viewBox="0 0 15 13"><path d="M0 .7h15M0 4.400h15M0 8.100h15M0 11.800h15" stroke="#9aa6b0" stroke-width="1.200"/></svg>
<div class="t " style="left:1819.2px;top:133px;font-size:13.7px;color:#fff;letter-spacing:-0.380px;">List</div>
<svg style="left:1847.5px;top:137px" width="7" height="4" viewBox="0 0 7 4"><path d="M0 0h7l-3.500 4z" fill="#e4e7ea"/></svg>
<div class="sep" style="left:1863.5px;top:126px;height:20px"></div>
<svg style="left:1873.5px;top:127.5px" width="19" height="19" viewBox="0 0 19 19"><path d="M14.800 6.300A6.300 6.300 0 1 0 15.800 11.500" fill="none" stroke="#c3cbd2" stroke-width="4.200"/><path d="M18.500 0v9.500H9z" fill="#c3cbd2"/></svg>
<svg style="left:1898px;top:137px" width="7" height="4" viewBox="0 0 7 4"><path d="M0 0h7l-3.500 4z" fill="#e4e7ea"/></svg>
<div class="t " style="left:1059.6px;top:159.5px;font-size:13.7px;color:#fff;">R</div>
<svg style="left:1075px;top:165px" width="7" height="4" viewBox="0 0 7 4"><path d="M0 0h7l-3.500 4z" fill="#e4e7ea"/></svg>
<div class="sep" style="left:1091.5px;top:152px;height:20px"></div>
<svg style="left:1103px;top:155px" width="20" height="19" viewBox="0 0 20 19"><rect x="7" y="0" width="10" height="10" rx="2" fill="#b05fb5"/><rect x="9" y="7" width="11" height="11" rx="2" fill="#6b8fd0"/><rect x="0" y="4" width="12" height="12" rx="2.500" fill="#a9c27a"/></svg>
<div class="t " style="left:1129px;top:159.5px;font-size:13.7px;color:#fff;letter-spacing:-0.046px;">Global Environment</div>
<svg style="left:1255.5px;top:165px" width="7" height="4" viewBox="0 0 7 4"><path d="M0 0h7l-3.500 4z" fill="#e4e7ea"/></svg>
<div class="abs" style="left:1746.500px;top:155.500px;width:152px;height:21px;background:#6e7d88;border:1px solid #3b4854;border-radius:4px"></div>
<svg style="left:1755px;top:158px" width="18" height="17" viewBox="0 0 18 17"><circle cx="6.500" cy="6.500" r="4.700" fill="none" stroke="#bcc5cc" stroke-width="2.400"/><path d="M10 10l6 6" stroke="#bcc5cc" stroke-width="3"/></svg>
<div class="abs" style="left:1049px;top:180px;width:860px;height:24.5px;background:#4e5c68;"></div>
<div class="abs" style="left:1049px;top:204.5px;width:860px;height:26px;background:#272822;"></div>
<div class="abs" style="left:1049px;top:230.5px;width:860px;height:24.5px;background:#4e5c68;"></div>
<div class="abs" style="left:1049px;top:255px;width:860px;height:24px;background:#272822;"></div>
<div class="abs" style="left:1049px;top:279px;width:860px;height:1px;background:#33342e;"></div>
<div class="abs" style="left:1288.5px;top:204.5px;width:1px;height:26px;background:#33342e;"></div>
<div class="abs" style="left:1288.5px;top:255px;width:1px;height:24px;background:#33342e;"></div>
<div class="t mono" style="left:1055.500px;top:184.9px;color:#f8f8f2">Data</div>
<div class="t mono" style="left:1075.500px;top:210.9px;color:#f8f8f2">dat</div>
<div class="t mono" style="left:1295.500px;top:210.9px;color:#f8f8f2">266 obs. of 6 variables</div>
<div class="t mono" style="left:1055.500px;top:236.2px;color:#f8f8f2">Values</div>
<div class="t mono" style="left:1075.500px;top:259.6px;color:#f8f8f2">indi</div>
<div class="t mono" style="left:1295.500px;top:259.6px;color:#f8f8f2">chr [1:2] "NY.GDP.MKTP.CD" "NE.IMP.GNFS.CD"</div>
<svg style="left:1055.5px;top:210.5px" width="14" height="14" viewBox="0 0 14 14"><circle cx="7" cy="7" r="7" fill="#6fa8dc"/><circle cx="7" cy="7" r="5.800" fill="#8fc0ee"/><path d="M5 3.500L10 7l-5 3.500z" fill="#fff"/></svg>
<svg style="left:1868.5px;top:210px" width="18" height="14" viewBox="0 0 18 14"><rect x="0" y="0" width="18" height="14" rx="1" fill="#f4f6f8"/><rect x="0" y="0" width="18" height="3.500" fill="#c5d3e6"/><path d="M0 7h18M0 10.500h18M4.500 3.500v10.500M9 3.500v10.500M13.500 3.500v10.500" stroke="#b4bcc6" stroke-width=".8"/></svg>
<div class="pane" style="left:1048px;top:407px;width:862px;height:613px"></div>
<div class="abs" style="left:1049px;top:408px;width:860px;height:29px;background:#2f3941;border-radius:3px 3px 0 0"></div>
<div class="abs" style="left:1048.5px;top:408.5px;width:50px;height:28.5px;background:#38434d;border:1px solid #242d35;border-bottom:none;border-radius:4px 4px 0 0"></div>
<div class="abs" style="left:1098.5px;top:408px;width:53px;height:29px;background:#4e5c68;border-radius:4px 4px 0 0"></div>
<div class="abs" style="left:1151.5px;top:408.5px;width:79px;height:28.5px;background:#38434d;border:1px solid #242d35;border-bottom:none;border-radius:4px 4px 0 0"></div>
<div class="abs" style="left:1230.5px;top:408.5px;width:53px;height:28.5px;background:#38434d;border:1px solid #242d35;border-bottom:none;border-radius:4px 4px 0 0"></div>
<div class="abs" style="left:1283.5px;top:408.5px;width:64.5px;height:28.5px;background:#38434d;border:1px solid #242d35;border-bottom:none;border-radius:4px 4px 0 0"></div>
<div class="abs" style="left:1348px;top:408.5px;width:99.5px;height:28.5px;background:#38434d;border:1px solid #242d35;border-bottom:none;border-radius:4px 4px 0 0"></div>
<div class="t " style="left:1060.8px;top:417.7px;font-size:13.7px;color:#fff;letter-spacing:-0.525px;">Files</div>
<div class="t " style="left:1110.6px;top:417.7px;font-size:13.7px;color:#fff;letter-spacing:-0.192px;">Plots</div>
<div class="t " style="left:1164.3px;top:417.7px;font-size:13.7px;color:#fff;letter-spacing:-0.583px;">Packages</div>
<div class="t " style="left:1243px;top:417.7px;font-size:13.7px;color:#fff;letter-spacing:0.206px;">Help</div>
<div class="t " style="left:1294.5px;top:417.7px;font-size:13.7px;color:#fff;letter-spacing:0.062px;">Viewer</div>
<div class="t " style="left:1360px;top:417.7px;font-size:13.7px;color:#fff;letter-spacing:-0.077px;">Presentation</div>
<svg style="left:1858px;top:417.7px" width="42" height="16" viewBox="0 0 42 16"><rect x="0.75" y="7.75" width="16.5" height="6.500" rx="1.200" fill="#46535f" stroke="#929ea8" stroke-width="1.500"/><rect x="0.500" y="7.300" width="17" height="2.600" rx="1" fill="#929ea8"/><rect x="23.75" y="0.75" width="15.500" height="13.500" rx="1.200" fill="#2f3941" stroke="#929ea8" stroke-width="1.500"/><rect x="23.300" y="0.300" width="16.400" height="3.400" rx="1" fill="#929ea8"/></svg>
<div class="abs" style="left:1049px;top:437px;width:860px;height:27px;background:#4e5c68;"></div>
<div class="abs" style="left:1049px;top:463.7px;width:860px;height:1.2px;background:#14212d;"></div>
<svg style="left:1058px;top:445px" width="50" height="17" viewBox="0 0 50 17"><path d="M0 8.500L8.500 1v4.500H18v6H8.500V16z" fill="#71808c"/><path d="M50 8.500L41.500 1v4.500H32v6h9.500V16z" fill="#71808c"/></svg>
<div class="sep" style="left:1115.5px;top:440.5px;height:20px"></div>
<svg style="left:1126px;top:442px" width="20" height="21" viewBox="0 0 20 21"><path d="M8.600 10.400L2.200 17.400" stroke="#b5793a" stroke-width="2.400" stroke-linecap="round"/><circle cx="13" cy="6.500" r="5.200" fill="#d9efe8" stroke="#b7d6cd" stroke-width=".8"/><path d="M13 3.200v6.600M9.700 6.500h6.600" stroke="#1f9d78" stroke-width="2.600"/></svg>
<div class="t " style="left:1152.7px;top:448px;font-size:13.7px;color:#fff;letter-spacing:0.245px;">Zoom</div>
<div class="sep" style="left:1201px;top:440.5px;height:20px"></div>
<svg style="left:1208px;top:444px" width="24" height="19" viewBox="0 0 24 19"><rect x="7" y="1" width="15.600" height="15.500" fill="#eef0f2"/><rect x="8.200" y="2.200" width="13.200" height="5.500" fill="#5b9fdc"/><path d="M8.200 7.700h13.200v6.800H8.200z" fill="#d9b53c"/><path d="M8.200 8.500c4-2.500 8-2 13.200 0V6.500c-5-1.500-9-1-13.200 0z" fill="#a9d3ee"/><path d="M8.200 12l6-2.500 7.200 1v1.500l-7-1-6.200 2.600z" fill="#3d3a1e" opacity=".75"/><path d="M1.500 6h5.500V3.600l4.500 4-4.500 4V9.200H1.500z" fill="#f4f5f6"/></svg>
<div class="t " style="left:1235.4px;top:448px;font-size:13.7px;color:#fff;letter-spacing:-0.133px;">Export</div>
<svg style="left:1282px;top:452px" width="7" height="4" viewBox="0 0 7 4"><path d="M0 0h7l-3.500 4z" fill="#e4e7ea"/></svg>
<div class="sep" style="left:1299.5px;top:440.5px;height:20px"></div>
<svg style="left:1311px;top:444px" width="18" height="18" viewBox="0 0 18 18"><rect x="3" y="2" width="14" height="15" fill="#eceef0"/><circle cx="4.500" cy="6" r="4.500" fill="#c8202c"/><path d="M2.500 4l4 4M6.500 4l-4 4" stroke="#fff" stroke-width="1.300"/></svg>
<div class="sep" style="left:1336.5px;top:440.5px;height:20px"></div>
<svg style="left:1346px;top:441px" width="20" height="20" viewBox="0 0 20 20"><path d="M18.800 1.200L13 6" stroke="#c0604f" stroke-width="2.800" stroke-linecap="round"/><path d="M7.500 6.300C9.500 4.600 12.500 4.800 14.200 6.600L10.600 13.600 6.500 19.600-.200 11.500z" fill="#e9c978"/><path d="M-.200 11.500l6.700 8.100 1.500-2.200-6-7.300z" fill="#f3e2ad"/><path d="M7.600 7l4.600 3.700M6.400 8.800l5 4" stroke="#b48428" stroke-width="1.100"/></svg>
<svg style="left:1777.5px;top:443.5px" width="20" height="18" viewBox="0 0 20 18"><path d="M1 9c2-5 6-7 10-6.5" fill="none" stroke="#1f8ed6" stroke-width="2.4" stroke-linecap="round"/><path d="M19 9c-2 5-6 7-10 6.5" fill="none" stroke="#1f8ed6" stroke-width="2.4" stroke-linecap="round"/><circle cx="10" cy="9" r="3" fill="#1f8ed6"/><path d="M2 11l3-1" stroke="#1f8ed6" stroke-width="2" /><path d="M18 7l-3 1" stroke="#1f8ed6" stroke-width="2"/></svg>
<div class="t " style="left:1802.5px;top:448px;font-size:13.7px;color:#fff;letter-spacing:-0.205px;">Publish</div>
<svg style="left:1857.5px;top:452px" width="7" height="4" viewBox="0 0 7 4"><path d="M0 0h7l-3.500 4z" fill="#e4e7ea"/></svg>
<div class="sep" style="left:1874.3px;top:440.5px;height:20px"></div>
<svg style="left:1884px;top:442px" width="19" height="19" viewBox="0 0 19 19"><path d="M14.800 6.300A6.300 6.300 0 1 0 15.800 11.500" fill="none" stroke="#c3cbd2" stroke-width="4.200"/><path d="M18.500 0v9.500H9z" fill="#c3cbd2"/></svg>
<div class="abs" style="left:1049px;top:464.9px;width:860px;height:545.6px;background:#fff;"></div>
<div class="abs" style="left:1048px;top:1010.5px;width:862px;height:1.5px;background:#111d29;"></div>
<div class="abs" style="left:1141.3px;top:474.2px;width:757.4000000000001px;height:481.50000000000006px;background:#ebebeb;"></div>
<div class="abs" style="left:1274.3px;top:474.2px;width:1px;height:481.50000000000006px;background:#f8f8f8;"></div>
<div class="abs" style="left:1470.9px;top:474.2px;width:1px;height:481.50000000000006px;background:#f8f8f8;"></div>
<div class="abs" style="left:1667.5px;top:474.2px;width:1px;height:481.50000000000006px;background:#f8f8f8;"></div>
<div class="abs" style="left:1864.1px;top:474.2px;width:1px;height:481.50000000000006px;background:#f8f8f8;"></div>
<div class="abs" style="left:1141.3px;top:888.985px;width:757.4000000000001px;height:1px;background:#f8f8f8;"></div>
<div class="abs" style="left:1141.3px;top:798.9549999999999px;width:757.4000000000001px;height:1px;background:#f8f8f8;"></div>
<div class="abs" style="left:1141.3px;top:708.925px;width:757.4000000000001px;height:1px;background:#f8f8f8;"></div>
<div class="abs" style="left:1141.3px;top:618.895px;width:757.4000000000001px;height:1px;background:#f8f8f8;"></div>
<div class="abs" style="left:1141.3px;top:528.865px;width:757.4000000000001px;height:1px;background:#f8f8f8;"></div>
<div class="abs" style="left:1175.85px;top:474.2px;width:1.3px;height:481.50000000000006px;background:#fff;"></div>
<div class="abs" style="left:1372.4499999999998px;top:474.2px;width:1.3px;height:481.50000000000006px;background:#fff;"></div>
<div class="abs" style="left:1569.05px;top:474.2px;width:1.3px;height:481.50000000000006px;background:#fff;"></div>
<div class="abs" style="left:1765.6499999999999px;top:474.2px;width:1.3px;height:481.50000000000006px;background:#fff;"></div>
<div class="abs" style="left:1141.3px;top:933.85px;width:757.4000000000001px;height:1.3px;background:#fff;"></div>
<div class="abs" style="left:1141.3px;top:843.82px;width:757.4000000000001px;height:1.3px;background:#fff;"></div>
<div class="abs" style="left:1141.3px;top:753.7900000000001px;width:757.4000000000001px;height:1.3px;background:#fff;"></div>
<div class="abs" style="left:1141.3px;top:663.76px;width:757.4000000000001px;height:1.3px;background:#fff;"></div>
<div class="abs" style="left:1141.3px;top:573.73px;width:757.4000000000001px;height:1.3px;background:#fff;"></div>
<div class="abs" style="left:1141.3px;top:483.70000000000005px;width:757.4000000000001px;height:1.3px;background:#fff;"></div>
<div class="abs" style="left:1175.9px;top:955.7px;width:1.2px;height:4px;background:#333;"></div>
<div class="abs" style="left:1372.5px;top:955.7px;width:1.2px;height:4px;background:#333;"></div>
<div class="abs" style="left:1569.1000000000001px;top:955.7px;width:1.2px;height:4px;background:#333;"></div>
<div class="abs" style="left:1765.7px;top:955.7px;width:1.2px;height:4px;background:#333;"></div>
<div class="abs" style="left:1137.3px;top:933.9px;width:4px;height:1.2px;background:#333;"></div>
<div class="abs" style="left:1137.3px;top:843.87px;width:4px;height:1.2px;background:#333;"></div>
<div class="abs" style="left:1137.3px;top:753.84px;width:4px;height:1.2px;background:#333;"></div>
<div class="abs" style="left:1137.3px;top:663.81px;width:4px;height:1.2px;background:#333;"></div>
<div class="abs" style="left:1137.3px;top:573.78px;width:4px;height:1.2px;background:#333;"></div>
<div class="abs" style="left:1137.3px;top:483.75px;width:4px;height:1.2px;background:#333;"></div>
<div class="t " style="left:1080.7100156249999px;top:929.3px;font-size:14.3px;color:#4d4d4d;">0.0e+00</div>
<div class="t " style="left:1080.7100156249999px;top:839.27px;font-size:14.3px;color:#4d4d4d;">5.0e+12</div>
<div class="t " style="left:1080.7100156249999px;top:749.24px;font-size:14.3px;color:#4d4d4d;">1.0e+13</div>
<div class="t " style="left:1080.7100156249999px;top:659.2099999999999px;font-size:14.3px;color:#4d4d4d;">1.5e+13</div>
<div class="t " style="left:1080.7100156249999px;top:569.18px;font-size:14.3px;color:#4d4d4d;">2.0e+13</div>
<div class="t " style="left:1080.7100156249999px;top:479.15000000000003px;font-size:14.3px;color:#4d4d4d;">2.5e+13</div>
<div class="t " style="left:1149.9550078125px;top:964.7px;font-size:14.3px;color:#4d4d4d;">0.0e+00</div>
<div class="t " style="left:1346.5550078125px;top:964.7px;font-size:14.3px;color:#4d4d4d;">2.5e+13</div>
<div class="t " style="left:1543.1550078125001px;top:964.7px;font-size:14.3px;color:#4d4d4d;">5.0e+13</div>
<div class="t " style="left:1739.7550078125px;top:964.7px;font-size:14.3px;color:#4d4d4d;">7.5e+13</div>
<div class="t " style="left:1501px;top:983px;font-size:18px;color:#000;letter-spacing:-0.171px;">PDB</div>
<div class="t" style="left:1058.5px;top:741px;font-size:18px;color:#000;transform-origin:0 0;transform:rotate(-90deg)">import</div>
<svg style="left:1049px;top:465px" width="859" height="545" viewBox="0 0 859 545"><circle cx="816.1" cy="31.4" r="3.65"/><circle cx="561.2" cy="166.2" r="3.65"/><circle cx="550.2" cy="198.3" r="3.65"/><circle cx="527.1" cy="207.2" r="3.65"/><circle cx="306.9" cy="296.3" r="3.65"/><circle cx="250.3" cy="339.2" r="3.65"/><circle cx="232.2" cy="361.5" r="3.65"/><circle cx="308.2" cy="361.5" r="3.65"/><circle cx="313.3" cy="376.4" r="3.65"/><circle cx="339.4" cy="341.5" r="3.65"/><circle cx="373.8" cy="335.7" r="3.65"/><circle cx="376.3" cy="337.3" r="3.65"/><circle cx="379.5" cy="334.8" r="3.65"/><circle cx="391.6" cy="323.3" r="3.65"/><circle cx="262.1" cy="402.2" r="3.65"/><circle cx="309.2" cy="402.2" r="3.65"/><circle cx="295.2" cy="413.4" r="3.65"/><circle cx="218.2" cy="413.4" r="3.65"/><circle cx="239.5" cy="424.5" r="3.65"/><circle cx="189.4" cy="430.3" r="3.65"/><circle cx="171.7" cy="444.3" r="3.65"/><circle cx="169.0" cy="446.7" r="3.65"/><circle cx="167.1" cy="449.2" r="3.65"/><circle cx="157.6" cy="439.7" r="3.65"/><circle cx="160.0" cy="442.4" r="3.65"/><circle cx="162.5" cy="445.4" r="3.65"/><circle cx="164.9" cy="448.4" r="3.65"/><circle cx="167.4" cy="452.2" r="3.65"/><circle cx="140.5" cy="451.1" r="3.65"/><circle cx="154.0" cy="445.9" r="3.65"/><circle cx="149.7" cy="448.9" r="3.65"/><circle cx="151.9" cy="452.2" r="3.65"/><circle cx="156.5" cy="455.4" r="3.65"/><circle cx="154.0" cy="453.3" r="3.65"/><circle cx="148.6" cy="457.6" r="3.65"/><circle cx="146.4" cy="455.4" r="3.65"/><circle cx="150.8" cy="458.7" r="3.65"/><circle cx="148.1" cy="453.3" r="3.65"/><circle cx="130.7" cy="457.6" r="3.65"/><circle cx="134.5" cy="457.6" r="3.65"/><circle cx="138.3" cy="459.8" r="3.65"/><circle cx="142.1" cy="463.0" r="3.65"/><circle cx="143.2" cy="465.2" r="3.65"/><circle cx="137.7" cy="465.2" r="3.65"/><circle cx="133.9" cy="463.0" r="3.65"/><circle cx="130.7" cy="462.0" r="3.65"/><circle cx="130.7" cy="466.3" r="3.65"/><circle cx="128.0" cy="467.4" r="3.65"/><circle cx="127.7" cy="469.5" r="3.65"/><circle cx="129.6" cy="469.3" r="3.65"/><circle cx="133.9" cy="466.8" r="3.65"/><circle cx="132.3" cy="459.8" r="3.65"/><circle cx="136.7" cy="462.5" r="3.65"/><circle cx="139.9" cy="465.2" r="3.65"/><circle cx="128.5" cy="464.7" r="3.65"/><circle cx="132.3" cy="468.5" r="3.65"/></svg>
<div class="abs" style="left:1201px;top:466px;width:201px;height:108.500px;background:#2f3941;box-shadow:0 2px 8px rgba(0,0,0,.35)"></div>
<div class="abs" style="left:1208px;top:472.3px;width:188px;height:29.7px;background:#4e5c68;"></div>
<div class="abs" style="left:1208px;top:534px;width:188px;height:1px;background:#4e5c68;"></div>
<svg style="left:1216px;top:477px" width="20" height="18" viewBox="0 0 20 18"><rect x="0" y="0" width="20" height="18" fill="#f4f4f0"/><rect x="1.500" y="1.500" width="17" height="6.500" fill="#4d9fe0"/><rect x="1.500" y="8" width="17" height="6.500" fill="#dcb43a"/><path d="M1.500 9.500c5-3 10-2 17 1V7h-17z" fill="#8cc8ee"/><circle cx="13" cy="4.500" r="1.800" fill="#eef6fc"/></svg>
<svg style="left:1215px;top:506px" width="22" height="19" viewBox="0 0 22 19"><path d="M5 1h11l5 5v12H5z" fill="#f6f6f6"/><path d="M16 1l5 5h-5z" fill="#d5d5d5"/><rect x="0" y="2.500" width="10" height="3" fill="#d9232e"/><path d="M8 15c3-2 5-6 5-9 0 4 3 7 7 8-4-1-8-.500-12 1z" fill="none" stroke="#d9232e" stroke-width="1.200"/></svg>
<svg style="left:1217px;top:542px" width="17" height="20" viewBox="0 0 17 20"><rect x="0.800" y="3.800" width="15.400" height="15.400" rx="1.500" fill="#fdfdfd" stroke="#b5791f" stroke-width="1.600"/><rect x="4.500" y="1.500" width="8" height="4" rx="1" fill="#e0b23c"/><circle cx="8.500" cy="1.800" r="1.500" fill="#e0b23c"/></svg>
<div class="t " style="left:1244px;top:480px;font-size:14.6px;color:#fff;letter-spacing:-0.379px;">Save as Image...</div>
<div class="t " style="left:1244px;top:510px;font-size:14.6px;color:#fff;letter-spacing:-0.576px;">Save as PDF...</div>
<div class="t " style="left:1244px;top:547.5px;font-size:14.6px;color:#fff;letter-spacing:0.073px;">Copy to Clipboard...</div>
<svg style="left:1170px;top:400px" width="170" height="90" viewBox="1170 400 170 90"><path d="M1299.5 430.0C1297.9 428.6 1294.2 423.9 1290.1 421.6C1286.1 419.2 1281.0 417.4 1275.1 416.0C1269.2 414.5 1261.7 413.7 1254.5 413.1C1247.3 412.6 1238.8 412.1 1231.9 412.8C1225.1 413.4 1218.5 414.6 1213.2 416.9C1207.9 419.1 1203.5 422.5 1200.0 426.3C1196.6 430.0 1193.6 435.3 1192.5 439.4C1191.4 443.5 1191.9 447.2 1193.5 450.7C1195.0 454.1 1197.7 457.4 1201.9 460.1C1206.1 462.7 1211.6 464.8 1218.8 466.6C1226.0 468.4 1236.3 470.0 1245.1 470.9C1253.8 471.9 1263.8 472.4 1271.4 472.3C1278.9 472.2 1284.8 471.6 1290.1 470.4C1295.4 469.1 1300.0 467.1 1303.3 464.8C1306.5 462.4 1308.9 459.3 1309.8 456.3C1310.8 453.3 1310.0 450.2 1308.9 446.9C1307.8 443.6 1305.1 439.7 1303.3 436.6C1301.4 433.5 1299.3 430.5 1297.6 428.2C1295.9 425.8 1293.7 423.5 1292.9 422.5" fill="none" stroke="#ed1c24" stroke-width="6.500" stroke-linecap="round" stroke-linejoin="round"/><path d="M1231.9 412.8C1228.8 413.5 1218.5 414.6 1213.2 416.9C1207.9 419.1 1203.5 422.5 1200.0 426.3C1196.6 430.0 1193.6 435.3 1192.5 439.4C1191.4 443.5 1191.9 447.2 1193.5 450.7C1195.0 454.1 1197.7 457.4 1201.9 460.1C1206.1 462.7 1211.6 464.8 1218.8 466.6C1226.0 468.4 1240.7 470.2 1245.1 470.9" fill="none" stroke="#ed1c24" stroke-width="8" stroke-linecap="round" stroke-linejoin="round"/></svg>
</body></html>
